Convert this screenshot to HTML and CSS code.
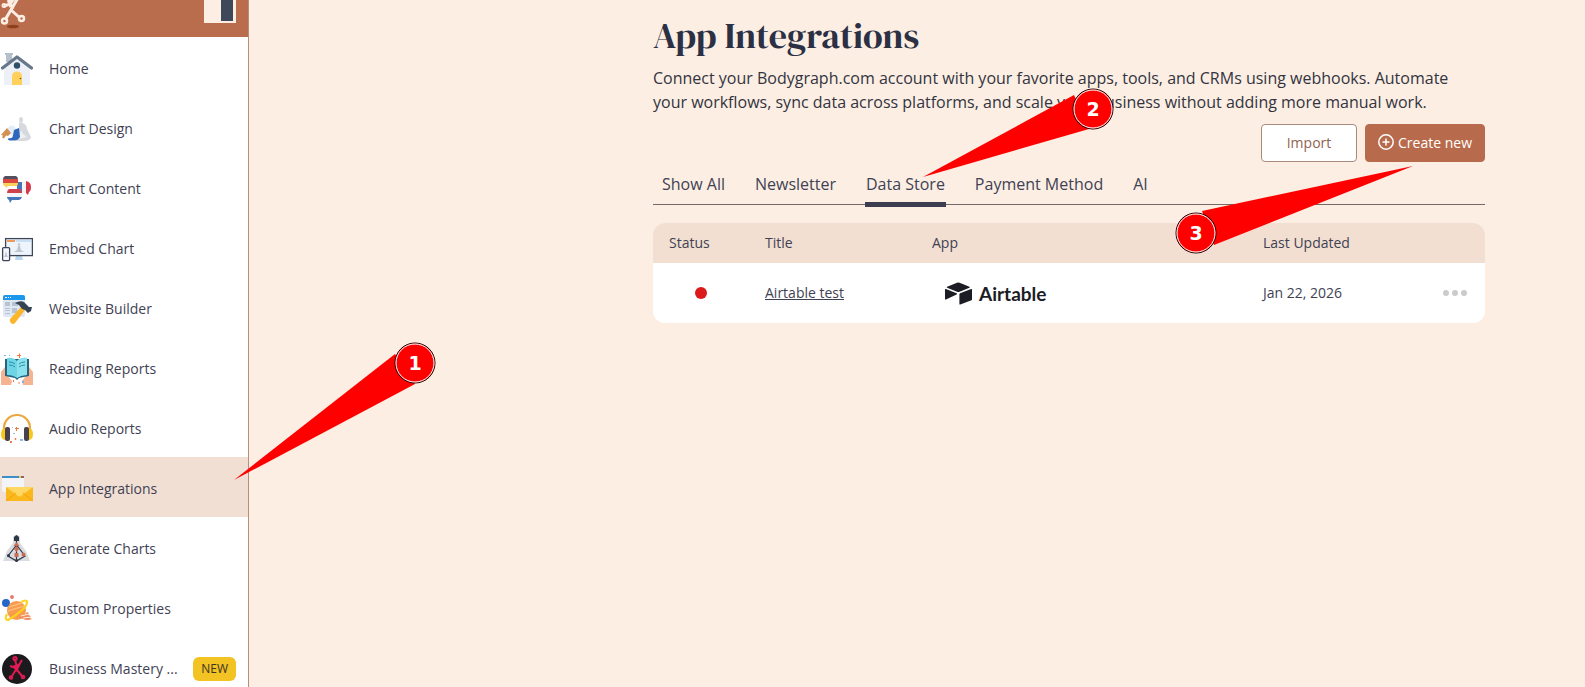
FILE: index.html
```html
<!DOCTYPE html>
<html lang="en">
<head>
  <meta charset="UTF-8">
  <meta name="viewport" content="width=device-width, initial-scale=1">
  <title>App Integrations</title>
  <link rel="stylesheet" href="styles.css">
</head>
<body>
  <aside class="sidebar">
    <div class="sidebar-header">
      <svg class="logo" width="26" height="30" viewBox="0 0 26 30">
        <ellipse cx="13" cy="26.500" rx="6" ry="1.800" fill="#8f3f1c"/>
        <g fill="none" stroke="#fdeee3" stroke-width="3">
          <path d="M5 20L18 -2M4 6l6 -2M11 10l9 8M8 0l5 9"/>
          <path d="M9 -2v10l6-8z" fill="#fdeee3" stroke="none"/>
          <circle cx="4.500" cy="21" r="2.500" stroke-width="2.500"/>
          <circle cx="21.500" cy="18.500" r="2.500" stroke-width="2.500"/>
          <circle cx="4" cy="5.500" r="1.500" stroke-width="2"/>
        </g>
      </svg>
      <button class="toggle" type="button" aria-label="Toggle sidebar"></button>
    </div>
    <nav class="menu">
      <a href="#" class="menu-item">
        <svg class="menu-icon" viewBox="0 0 32 32">
          <path d="M4 0h8v2h-1v7H5V2H4z" fill="#b4bfcc"/>
          <path d="M16 4L3 15v17h26V15z" fill="#edf1f7"/>
          <path d="M1.500 15L16 4l14.500 11" fill="none" stroke="#66788a" stroke-width="3.200" stroke-linecap="round" stroke-linejoin="round"/>
          <circle cx="16" cy="12.500" r="3.200" fill="#2f5069"/>
          <path d="M11 32V23a5 4.500 0 0 1 10 0v9z" fill="#ffd05c"/>
          <circle cx="19.500" cy="25.500" r=".8" fill="#7a4b1c"/>
        </svg>
        <span class="menu-label">Home</span>
      </a>
      <a href="#" class="menu-item">
        <svg class="menu-icon" viewBox="0 0 32 32">
          <g fill="#d6d9de">
            <ellipse cx="20" cy="7" rx="2" ry="3"/>
            <path d="M18 10h4q4 2 4 6l4 8q0 3-6 4H13l2-5 3-4z"/>
          </g>
          <path d="M20 17l2 4 4 3-9 2z" fill="#eef0f3"/>
          <path d="M6 17q2-6 7-4l4 6-5 5z" fill="#e2edf8"/>
          <path d="M13 17l5-2 1 9q-2 4-8 3.500-5 0-4-2 5 0 5-3z" fill="#2f67bd"/>
          <path d="M0 22l6-7 4 5-3 3-2-.5-2 3-2-1 1-2z" fill="#d29152"/>
        </svg>
        <span class="menu-label">Chart Design</span>
      </a>
      <a href="#" class="menu-item">
        <svg class="menu-icon" viewBox="0 0 32 32">
          <path d="M16 9h5v12l-5-3z" fill="#4a74b8"/>
          <path d="M21 8h4v12h-4z" fill="#f3f4f6"/>
          <path d="M25 8q5 1 5 6 0 4-2 5l-1 3-2-2z" fill="#d8374a"/>
          <path d="M4 3h11q2 1 2 3H2q0-2 2-3z" fill="#535160"/>
          <path d="M2 6h15v4H2z" fill="#d9473f"/>
          <path d="M2 10h15q0 3-2 3H7l-2 2-1-2q-2 0-2-3z" fill="#f9d25b"/>
          <path d="M8 16h12l1 4H6q0-3 2-4z" fill="#d0404d"/>
          <path d="M6 20h15v4H6z" fill="#f3f5f8"/>
          <path d="M6 24h15q-1 3-3 3h-7l-2 3-1-3q-2-1-2-3z" fill="#4576bc"/>
        </svg>
        <span class="menu-label">Chart Content</span>
      </a>
      <a href="#" class="menu-item">
        <svg class="menu-icon" viewBox="0 0 32 32">
          <path d="M15 23h6l1 4h-8z" fill="#b9d8ef"/>
          <rect x="4.600" y="5.600" width="26.800" height="17" fill="#edf4fb" stroke="#3c4658" stroke-width="1.300"/>
          <path d="M6 7h8v2H6z" fill="#ef9a5c"/>
          <path d="M15 7h15v2H15z" fill="#c9dff3"/>
          <circle cx="18" cy="11.500" r="1.300" fill="#bfc6ce"/>
          <path d="M17 13h2l1 4 3 2H13l3-2z" fill="#bfc6ce"/>
          <rect x="1.600" y="14.600" width="7" height="13" rx="1" fill="#f4f7fb" stroke="#3c4658" stroke-width="1.300"/>
          <path d="M5 18l1 4 1 2H3l1-2z" fill="#bfc6ce"/>
        </svg>
        <span class="menu-label">Embed Chart</span>
      </a>
      <a href="#" class="menu-item">
        <svg class="menu-icon" viewBox="0 0 32 32">
          <rect x="2" y="2" width="22" height="22" rx="2" fill="#dfe8f2"/>
          <path d="M4 2h18q2 0 2 2v3H2V4q0-2 2-2z" fill="#1b98ee"/>
          <path d="M4 4h2v1H4zM7 4h1v1H7zM9 4h1v1H9z" fill="#fff"/>
          <path d="M4 9h5v4H4zM11 9h6v4h-6zM4 15h5v1H4zM4 17h5v1H4zM4 20h5v1H4zM11 15h5v5h-5z" fill="#b7c3d3"/>
          <path d="M20 14l4 3-10 13q-2 2-4 0t-1-4z" fill="#fbb62b"/>
          <path d="M14 10q5-3 9-1l5 5 3 0-1 4-3 2-3-3-3-1-3-4q-2-1-4-2z" fill="#354452"/>
        </svg>
        <span class="menu-label">Website Builder</span>
      </a>
      <a href="#" class="menu-item">
        <svg class="menu-icon" viewBox="0 0 32 32">
          <path d="M0 32V19l4-5 3 9 4 5-1 4zM32 32V19l-4-5-3 9-4 5 1 4z" fill="#f5b391"/>
          <path d="M4 6h24v17l-10 2-2 2-2-2-10-2z" fill="#24657c"/>
          <path d="M6 5q6-1 10 3 4-4 10-3v17q-6 0-10 3-4-3-10-3z" fill="#6ed5e6"/>
          <path d="M16 8q4-4 10-3v17q-6 0-10 3z" fill="#8be2ef"/>
          <path d="M8 9q4 0 6 2M8 12q4 0 6 2M18 11q2-2 6-2M18 14q2-2 6-2" fill="none" stroke="#2b8ba5" stroke-width="1"/>
          <path d="M16 2h2V.5h1V2h1v1h-1v2h-1V3h-2zM12 27h1v2h-1z" fill="#ee7a3d"/>
          <path d="M3 2h2v1H3zM8 2h1v1H8zM21 28h2v2h-2z" fill="#70b4f0"/>
          <circle cx="18" cy="30" r=".8" fill="#ee7a3d"/>
        </svg>
        <span class="menu-label">Reading Reports</span>
      </a>
      <a href="#" class="menu-item">
        <svg class="menu-icon" viewBox="0 0 32 32">
          <path d="M3 17v-2a13 13 0 0 1 26 0v2" fill="none" stroke="#eda63b" stroke-width="2.200"/>
          <path d="M5 15q-5 0-5 6t5 6zM27 15q5 0 5 6t-5 6z" fill="#f7c719"/>
          <rect x="4" y="14" width="5" height="14" rx="2" fill="#4a4150"/>
          <rect x="23" y="14" width="5" height="14" rx="2" fill="#4a4150"/>
          <path d="M14 15h1v-1h1v1h2v1h-2v2h-1v-2h-1zM9 28h2v2H9z" fill="#ee7a3d"/>
          <path d="M12 20h2v1h-2zM19 26h3v2h-3zM11 14h1v1h-1z" fill="#8abdf1"/>
          <circle cx="14.500" cy="26" r=".9" fill="#ee7a3d"/>
        </svg>
        <span class="menu-label">Audio Reports</span>
      </a>
      <a href="#" class="menu-item active">
        <svg class="menu-icon" viewBox="0 0 32 32">
          <path d="M1 5h22v14H4q-3 0-3-3z" fill="#f3f4f7"/>
          <path d="M1 3h22v2H1z" fill="#3d8fc8"/>
          <path d="M18 3h2v2h-2z" fill="#f5c451"/>
          <path d="M20 3h3v2h-3z" fill="#8a6573"/>
          <rect x="5" y="14" width="27" height="14" rx="1" fill="#fbb81c"/>
          <path d="M5 14h27L20 23q-1.500 1-3 0z" fill="#ffd863"/>
          <path d="M5 28l10-8M32 28l-10-8" stroke="#f3a20b" stroke-width="1"/>
        </svg>
        <span class="menu-label">App Integrations</span>
      </a>
      <a href="#" class="menu-item">
        <svg class="menu-icon" viewBox="0 0 32 32">
          <path d="M12 4q4-5 7 0v6l6 8 4 10H2l4-10 6-8z" fill="#d9dce0"/>
          <path d="M15.500 3v26M15.500 12L7 23l8.500 5L24 23z" fill="none" stroke="#303747" stroke-width="1.200"/>
          <g fill="#303747">
            <path d="M13 4l2.500-2L18 4v4H13z"/>
            <circle cx="7.500" cy="22.500" r="1.500"/>
            <circle cx="15.500" cy="27.500" r="1.500"/>
          </g>
          <g fill="#c96c51">
            <path d="M15.500 9l3 4h-6zM15.500 13l2.500 3-2.500 3-2.500-3z"/>
            <rect x="13.500" y="20" width="4" height="4"/>
            <circle cx="22.500" cy="21.500" r="2"/>
          </g>
        </svg>
        <span class="menu-label">Generate Charts</span>
      </a>
      <a href="#" class="menu-item">
        <svg class="menu-icon" viewBox="0 0 32 32">
          <circle cx="5" cy="10" r="4" fill="#2467c9"/>
          <circle cx="11" cy="4" r="1.900" fill="#e2796b"/>
          <circle cx="15.500" cy="17.500" r="9.500" fill="#f79b4c"/>
          <path d="M8 14l13-4M7 18l16-5" stroke="#fdbb76" stroke-width="1.500"/>
          <path d="M20 9q6-3 6 0 0 4-6 9T7 27q-4 0-1-6" fill="none" stroke="#ffd21f" stroke-width="2.200"/>
          <path d="M17 24q6 0 9-5l2 1-1 2 3 1-1 2 2 1q-5 2-9 0z" fill="#ee8a5c"/>
          <path d="M20 23l8-2M22 25l8-1" stroke="#fff0e6" stroke-width="1"/>
        </svg>
        <span class="menu-label">Custom Properties</span>
      </a>
      <a href="#" class="menu-item">
        <svg class="menu-icon" viewBox="0 0 32 32">
          <circle cx="16" cy="16" r="15" fill="#1b1a1c"/>
          <g fill="none" stroke="#e21a53" stroke-width="2">
            <path d="M11 23L21 7M14 7l2 7M9 13l6 2M16 17l5 6"/>
            <circle cx="14" cy="5.500" r="1.600"/>
            <circle cx="10" cy="24.500" r="1.300"/>
            <circle cx="22" cy="24" r="1.300"/>
          </g>
          <path d="M11 13l9-3-4 9z" fill="#e21a53"/>
        </svg>
        <span class="menu-label">Business Mastery ...</span>
        <span class="badge">NEW</span>
      </a>
    </nav>

    <svg class="callout callout-1" width="204" height="142" viewBox="0 0 204 142">
      <path d="M2 138L163 12l20 30z"/>
      <circle class="ring-dark" cx="183" cy="21" r="20"/>
      <circle class="ring-light" cx="183" cy="21" r="19"/>
      <text x="183" y="28">1</text>
    </svg>
  </aside>

  <main class="main">
    <section class="content">
      <h1>App Integrations</h1>
      <p class="intro">Connect your Bodygraph.com account with your favorite apps, tools, and CRMs using webhooks. Automate your workflows, sync data across platforms, and scale your business without adding more manual work.</p>

      <div class="actions">
        <button class="btn btn-import" type="button">Import</button>
        <button class="btn btn-create" type="button">
          <svg width="16" height="16" viewBox="0 0 16 16" fill="none" stroke="currentColor" stroke-width="1.500">
            <circle cx="8" cy="8" r="7.200"/>
            <path d="M8 4.500v7M4.500 8h7"/>
          </svg>
          Create new
        </button>
      </div>

      <nav class="tabs">
        <a href="#" class="tab">Show All</a>
        <a href="#" class="tab">Newsletter</a>
        <a href="#" class="tab active">Data Store</a>
        <a href="#" class="tab">Payment Method</a>
        <a href="#" class="tab">AI</a>
      </nav>

      <table class="apps">
        <thead>
          <tr>
            <th class="col-status">Status</th>
            <th class="col-title">Title</th>
            <th>App</th>
            <th class="col-date">Last Updated</th>
            <th class="col-more"></th>
          </tr>
        </thead>
        <tbody>
          <tr>
            <td><span class="status-dot"></span></td>
            <td class="text"><a href="#">Airtable test</a></td>
            <td>
              <div class="app-logo">
                <svg width="27" height="23" viewBox="0 0 27 23" fill="#1b1c24">
                  <path d="M12 .7q1.300-.5 2.600 0l9.800 4q1 .6 0 1.100l-9.800 3.900q-1.300.5-2.600 0L2.200 5.800q-1-.5 0-1.100z"/>
                  <path d="M14.400 12.300q0-.7.700-1l11-4.300q.9-.3.900.6v9.800q0 .6-.6.900l-11.100 4.200q-.9.300-.9-.6z"/>
                  <path d="M0 7.600q0-1 .9-.6l10.700 4.300q1 .5 0 1.100L1 17.500q-1 .3-1-.6z"/>
                </svg>
                <span>Airtable</span>
              </div>
            </td>
            <td class="text date">Jan 22, 2026</td>
            <td>
              <button class="more" type="button" aria-label="More actions"><i></i><i></i><i></i></button>
            </td>
          </tr>
        </tbody>
      </table>

      <svg class="callout callout-2" width="194" height="94" viewBox="0 0 194 94">
        <path d="M2 89L153 7l15 34z"/>
        <circle class="ring-dark" cx="172" cy="21" r="20"/>
        <circle class="ring-light" cx="172" cy="21" r="19"/>
        <text x="172" y="28">2</text>
      </svg>
      <svg class="callout callout-3" width="242" height="92" viewBox="0 0 242 92">
        <path d="M238 3L27 48l12 34z"/>
        <circle class="ring-dark" cx="21" cy="70" r="20"/>
        <circle class="ring-light" cx="21" cy="70" r="19"/>
        <text x="21" y="77">3</text>
      </svg>
    </section>
  </main>
</body>
</html>
```
FILE: styles.css
```css
* {
  box-sizing: border-box;
}

body {
  margin: 0;
  display: flex;
  height: 100vh;
  overflow: hidden;
  background-color: #fceee3;
  color: #3f4254;
  font-family: "Open Sans", "Noto Sans", sans-serif;
  font-size: 14px;
}

a {
  color: inherit;
}

button {
  font-family: inherit;
  cursor: pointer;
}

/* Sidebar */
.sidebar {
  position: relative;
  z-index: 1;
  flex: 0 0 249px;
  height: 100%;
  background-color: #fff;
  border-right: 1px solid #b98d7b;
}

.sidebar-header {
  display: flex;
  justify-content: space-between;
  align-items: flex-start;
  height: 37px;
  padding-right: 12px;
  background-color: #b96d4d;
}

.toggle {
  width: 32px;
  height: 23px;
  padding: 0;
  border: solid #fceee3;
  border-width: 0 3px 2px 17px;
  background-color: #3f475a;
}

.menu {
  height: calc(100% - 37px);
  overflow: hidden;
}

.menu-item {
  display: flex;
  align-items: center;
  gap: 16px;
  height: 60px;
  padding: 4px 12px 0 1px;
  text-decoration: none;
}

.menu-item.active {
  background-color: #f2dfd3;
}

.menu-icon {
  flex: none;
  width: 32px;
  height: 32px;
}

.menu-label {
  flex: 1;
  padding-bottom: 2px;
  font-weight: 500;
  white-space: nowrap;
}

.badge {
  margin-left: -16px;
  padding: 0 8px;
  border-radius: 6px;
  background-color: #f3c223;
  color: #3a3426;
  font-size: 12px;
  line-height: 24px;
}

/* Main */
.main {
  flex: 1;
  padding: 0 100px 0 32px;
}

.content {
  position: relative;
  max-width: 832px;
  margin-left: auto;
  padding-top: 12px;
}

h1 {
  margin: 0;
  color: #2b3044;
  font-family: "DM Serif Display", "Liberation Serif", serif;
  font-size: 36px;
  font-weight: normal;
  line-height: 48px;
}

.intro {
  margin: 6px 0 10px;
  color: #33343f;
  font-size: 16px;
  font-weight: 500;
  line-height: 24px;
}

.actions {
  display: flex;
  justify-content: flex-end;
  gap: 8px;
}

.btn {
  display: flex;
  align-items: center;
  justify-content: center;
  gap: 4px;
  height: 38px;
  padding: 0 12px 2px;
  border: 1px solid #a98a7e;
  border-radius: 4px;
  font-size: 14px;
}

.btn-import {
  width: 96px;
  background-color: #fff;
  color: #8f6352;
}

.btn-create {
  width: 120px;
  border-color: #b86b4c;
  background-color: #b86b4c;
  color: #fff;
  white-space: nowrap;
}

.btn svg {
  flex: none;
}

.tabs {
  display: flex;
  gap: 28px;
  height: 43px;
  padding: 0 8px;
  border-bottom: 1px solid #77696a;
}

.tab {
  height: 45px;
  padding: 10px 1px 0;
  font-size: 16px;
  line-height: 24px;
  text-decoration: none;
}

.tab.active {
  border-bottom: 5px solid #3c3d50;
}

/* Table */
.apps {
  width: 100%;
  margin-top: 18px;
  border-collapse: collapse;
  border-radius: 12px;
  overflow: hidden;
  table-layout: fixed;
  background-color: #fff;
}

.apps th,
.apps td {
  padding: 0 16px;
  font-weight: 500;
  text-align: left;
}

.apps th {
  height: 40px;
  padding-bottom: 2px;
  background-color: #f2dfd1;
}

.apps td {
  height: 60px;
}

.apps .text {
  padding-bottom: 2px;
}

.apps .date {
  font-weight: 400;
}

.apps .col-status {
  width: 96px;
}

.apps .col-title {
  width: 167px;
}

.apps .col-date {
  width: 150px;
}

.apps .col-more {
  width: 88px;
}

.status-dot {
  display: block;
  width: 12px;
  height: 12px;
  margin: 0 auto;
  border-radius: 50%;
  background-color: #dc1a1a;
}

.app-logo {
  display: flex;
  align-items: center;
  gap: 7px;
  padding-left: 13px;
  color: #1b1c24;
  font-family: Lato, sans-serif;
  font-size: 19px;
  font-weight: bold;
}

.more {
  display: flex;
  gap: 3px;
  margin-left: auto;
  padding: 0 2px;
  border: 0;
  background: none;
}

.more i {
  width: 6px;
  height: 6px;
  border-radius: 50%;
  background-color: #cbcbcb;
}

/* Numbered callouts */
.callout {
  position: absolute;
  pointer-events: none;
  fill: #fe0000;
}

.callout text {
  fill: #fff;
  font-family: "DejaVu Sans", sans-serif;
  font-size: 19px;
  font-weight: bold;
  text-anchor: middle;
}

.ring-dark {
  stroke: #1a0000;
  stroke-width: 1px;
}

.ring-light {
  stroke: #fff;
  stroke-width: 1px;
}

.callout-1 {
  top: 342px;
  left: 232px;
}

.callout-2 {
  top: 88px;
  left: 268px;
}

.callout-3 {
  top: 163px;
  right: 68px;
}
```
